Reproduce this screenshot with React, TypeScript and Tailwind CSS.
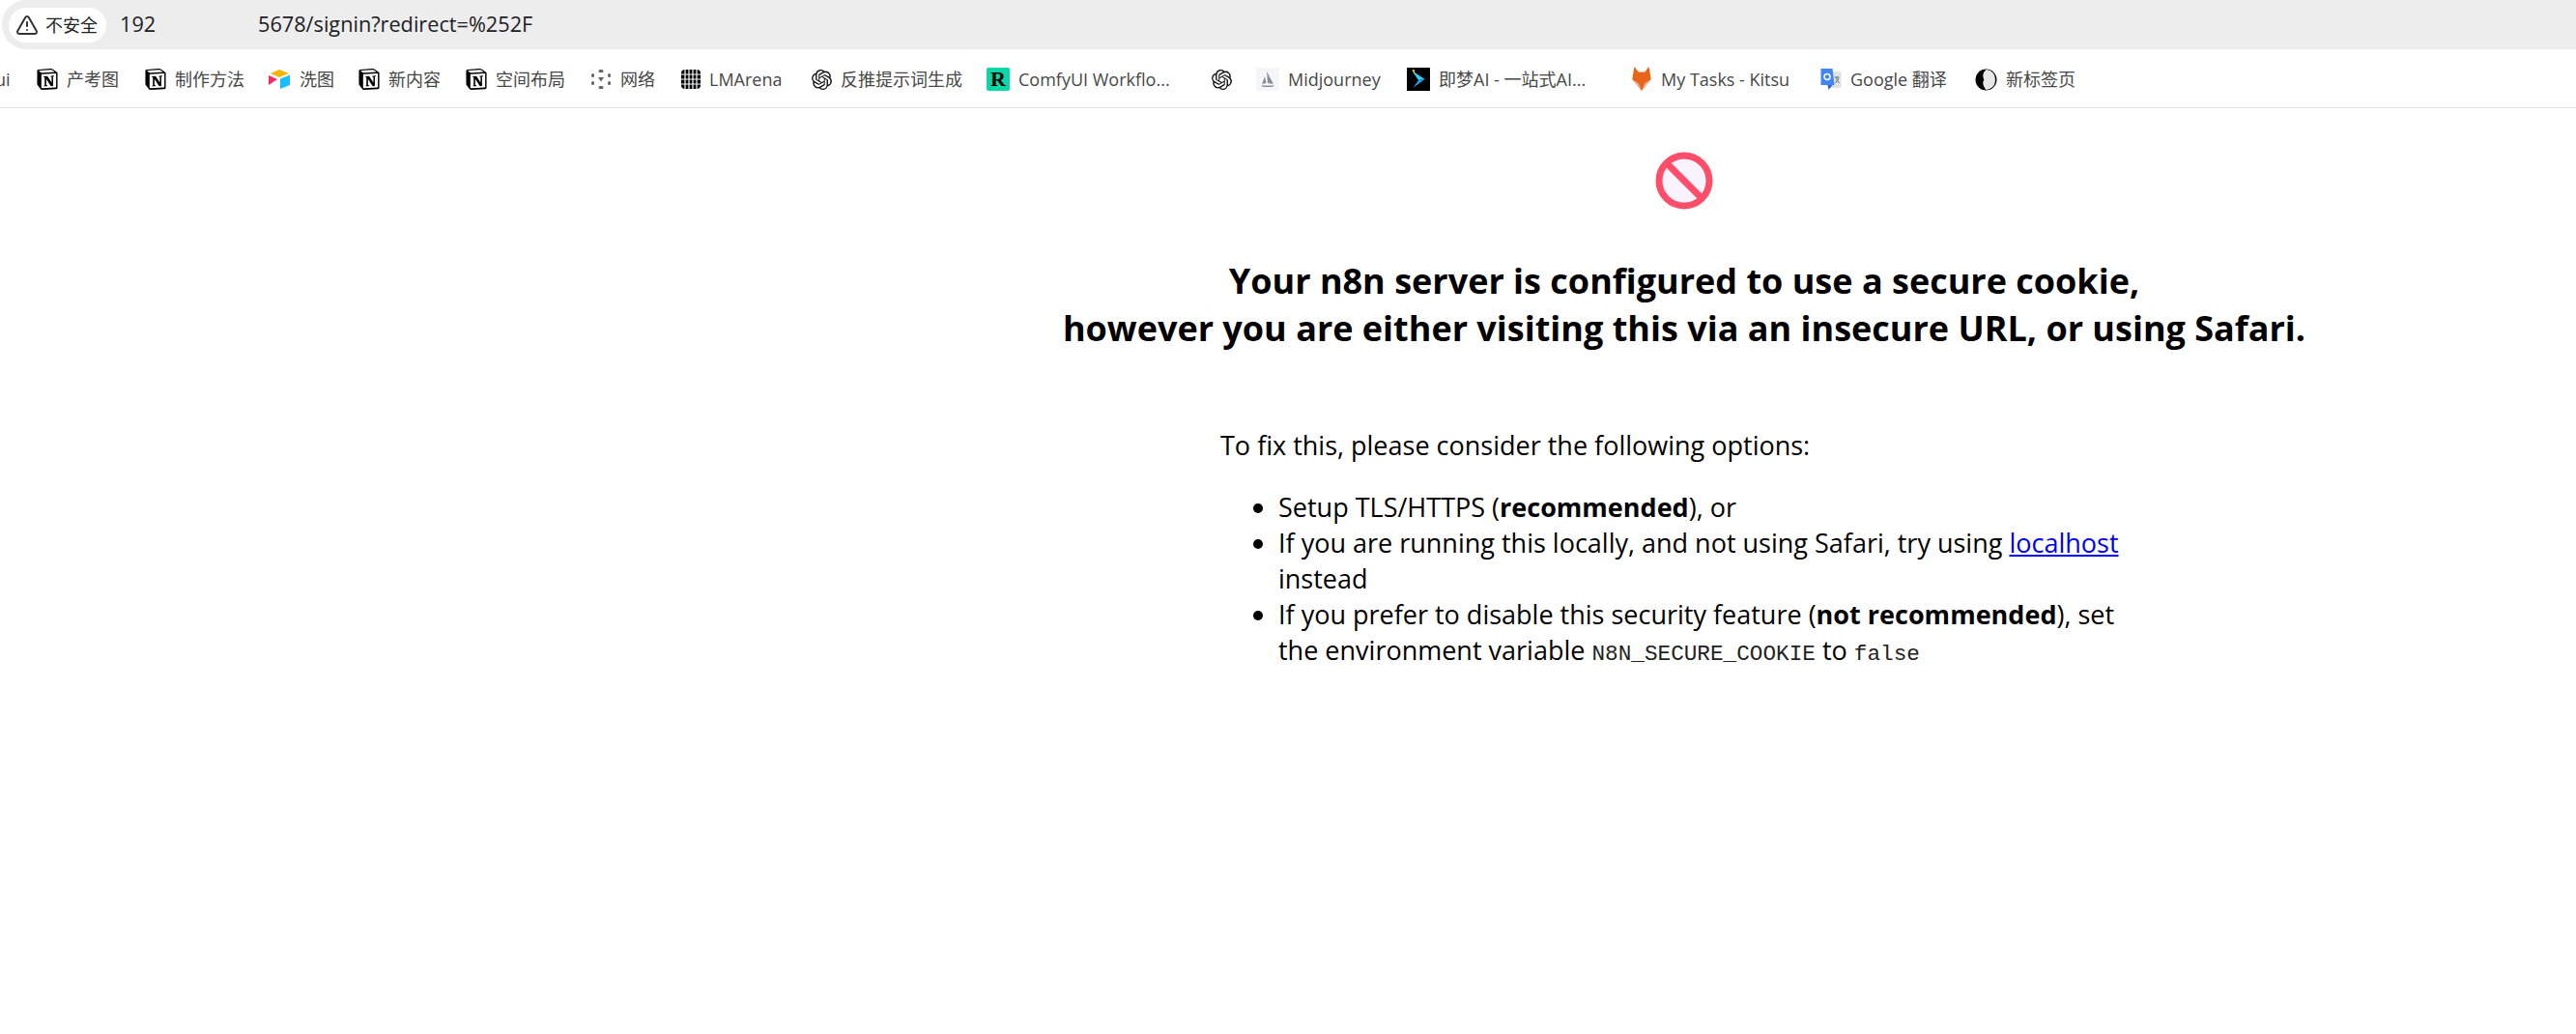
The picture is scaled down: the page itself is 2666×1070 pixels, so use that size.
import { TriangleAlert } from "lucide-react";
import { SiNotion, SiOpenai } from "react-icons/si";

const sans = "font-['Open_Sans','Noto_Sans_CJK_SC',sans-serif]";

function NotionIcon() {
  return <SiNotion size={22} className="shrink-0 text-black" />;
}

function OpenAiIcon() {
  return <SiOpenai size={21} className="shrink-0 text-[#111]" />;
}

function AirtableIcon() {
  return (
    <svg width="24" height="22" viewBox="0 0 24 22" className="shrink-0">
      <path d="M12 1 L22 5 L12 9 L3 5 Z" fill="#fcb400" />
      <path d="M13 10.5 L23 6.5 L23 17 L13 21 Z" fill="#18bfff" />
      <path d="M1 7 L10 11 L1 17 Z" fill="#f82b60" />
    </svg>
  );
}

function DotsIcon() {
  return (
    <svg width="22" height="22" viewBox="0 0 22 22" className="shrink-0">
      <g fill="#666">
        <rect x="8.5" y="1" width="5" height="3" rx="1.5" />
        <rect x="8.5" y="18" width="5" height="3" rx="1.5" />
        <rect x="1" y="5" width="3" height="4" rx="1.5" />
        <rect x="18" y="5" width="3" height="4" rx="1.5" />
        <rect x="1" y="13" width="3" height="4" rx="1.5" />
        <rect x="18" y="13" width="3" height="4" rx="1.5" />
        <path d="M8 9 L14 9 L11 13.5 Z" />
      </g>
    </svg>
  );
}

function GridIcon() {
  return (
    <svg width="20" height="22" viewBox="0 0 20 22" className="shrink-0">
      <rect x="0" y="1" width="20" height="20" rx="4" fill="#000" />
      <path d="M4 1 V21 M8 1 V21 M12 1 V21 M16 1 V21 M0 6 H20 M0 11 H20 M0 16 H20" stroke="#fff" strokeWidth="1.2" />
    </svg>
  );
}

function ComfyIcon() {
  return (
    <div className="flex h-6 w-6 shrink-0 items-center justify-center rounded-[2px] bg-[#0ad7a5] font-['Liberation_Serif',serif] text-[22px] font-bold leading-none text-black">
      R
    </div>
  );
}

function MidjourneyIcon() {
  return (
    <div className="flex h-6 w-6 shrink-0 items-center justify-center bg-[#f4f6f9]">
      <svg width="18" height="20" viewBox="0 0 18 20" fill="#8b8f98">
        <path d="M8 2 L15 15 L9 14 Z" />
        <path d="M6 7 L7.5 14 L3 15 Z" />
        <path d="M2 16.5 L16 16.5 L14 18 L4 18 Z" />
      </svg>
    </div>
  );
}

function JimengIcon() {
  return (
    <div className="flex h-[24px] w-[24px] shrink-0 items-center justify-center bg-black">
      <svg width="18" height="22" viewBox="0 0 16 20">
        <path d="M2 2 L14 10 L8 11 Z" fill="#2bd4f5" />
        <path d="M8 11 L14 10 L3 18 Z" fill="#1f9ff0" />
        <path d="M2 1 L4 1 L5 6 Z" fill="#f5d442" />
      </svg>
    </div>
  );
}

function KitsuIcon() {
  return (
    <svg width="22" height="26" viewBox="0 0 20 24" className="shrink-0">
      <path d="M3 0 L7 5 L13 5 L17 0 L19 12 L10 23 L1 12 Z" fill="#e8661c" />
      <path d="M1 12 L7 16 L10 23 Z" fill="#e9b49a" />
      <path d="M19 12 L13 16 L10 23 Z" fill="#e9b49a" />
    </svg>
  );
}

function TranslateIcon() {
  return (
    <svg width="23" height="24" viewBox="0 0 22 24" className="shrink-0">
      <rect x="8" y="4" width="14" height="17" rx="1" fill="#dfe3e6" />
      <path d="M1 1 H13 L15 18 H1 Z" fill="#4285f4" />
      <path d="M8 18 L13 18 L9 23 Z" fill="#3367d6" />
      <circle cx="7.5" cy="9.5" r="3" fill="none" stroke="#fff" strokeWidth="1.5" />
      <path d="M15 10 H20 M17.5 9 V11 M16 16 L19.5 11 M16.5 11 L20 16" stroke="#6b7378" strokeWidth="1" fill="none" />
    </svg>
  );
}

function NewTabIcon() {
  return (
    <svg width="23" height="23" viewBox="0 0 22 22" className="shrink-0">
      <circle cx="11" cy="11" r="10.5" fill="#000" />
      <path d="M11 1 C18 2 20 6 20 11 C20 16 18 20 11 21 C8 17 7 14 9 11 C7 7 8 4 11 1 Z" fill="#e8e8e8" />
    </svg>
  );
}

const bookmarks = [
  { icon: <NotionIcon />, label: "产考图", w: "w-[112px]" },
  { icon: <NotionIcon />, label: "制作方法", w: "w-[127px]" },
  { icon: <AirtableIcon />, label: "洗图", w: "w-[94px]" },
  { icon: <NotionIcon />, label: "新内容", w: "w-[111px]" },
  { icon: <NotionIcon />, label: "空间布局", w: "w-[129px]" },
  { icon: <DotsIcon />, label: "网络", w: "w-[94px]" },
  { icon: <GridIcon />, label: "LMArena", w: "w-[135px]" },
  { icon: <OpenAiIcon />, label: "反推提示词生成", w: "w-[181px]" },
  { icon: <ComfyIcon />, label: "ComfyUI Workflo...", w: "w-[233px]" },
  { icon: <OpenAiIcon />, label: "", w: "w-[46px]" },
  { icon: <MidjourneyIcon />, label: "Midjourney", w: "w-[156px]" },
  { icon: <JimengIcon />, label: "即梦AI - 一站式AI...", w: "w-[232px]" },
  { icon: <KitsuIcon />, label: "My Tasks - Kitsu", w: "w-[195px]" },
  { icon: <TranslateIcon />, label: "Google 翻译", w: "w-[161px]" },
  { icon: <NewTabIcon />, label: "新标签页", w: "w-[120px]" },
];

export default function App() {
  return (
    <div className={`flex min-h-[1070px] flex-col bg-white ${sans}`}>
      <div className="ml-[2px] flex h-[51px] items-center rounded-l-[25px] bg-[#eeedee] pl-[7px]">
        <div className="flex h-[36px] items-center gap-[7px] rounded-full bg-white pl-[7px] pr-[9px] text-[18px] text-[#222]">
          <TriangleAlert size={24} strokeWidth={2} className="text-[#333]" />
          <span className="font-['Noto_Sans_CJK_SC',sans-serif]">不安全</span>
        </div>
        <div className="ml-[14px] flex text-[21.7px] text-[#202124]">
          <span className="w-[143px]">192</span>
          <span>5678/signin?redirect=%252F</span>
        </div>
      </div>
      <div className="flex h-[61px] items-center overflow-hidden border-b border-[#e2e2e2] pt-[2px] text-[18px] text-[#474747]">
        <span className="-ml-[5px] w-[43px] shrink-0">ui</span>
        {bookmarks.map((b, i) => (
          <div key={i} className={`flex shrink-0 items-center gap-[9px] ${b.w}`}>
            {b.icon}
            {b.label && <span className="whitespace-nowrap">{b.label}</span>}
          </div>
        ))}
      </div>
      <main className="ml-[1098px] flex w-[1290px] flex-col items-center pt-[44px] text-black">
        <svg width="62" height="62" viewBox="0 0 62 62" stroke="#ff4d6a" strokeWidth="7">
          <circle cx="31" cy="31" r="26" fill="#f8f3fe" />
          <path d="M13 13 L49 49" fill="none" />
        </svg>
        <h1 className="mt-[48px] text-center text-[36px] font-bold leading-[49px]">
          Your n8n server is configured to use a secure cookie,
          <br />
          however you are either visiting this via an insecure URL, or using Safari.
        </h1>
        <div className="mt-[78px] w-[960px] text-[27px] leading-[37px]">
          <p>To fix this, please consider the following options:</p>
          <ul className="mt-[27px] list-disc pl-[60px]">
            <li>
              Setup TLS/HTTPS (<b>recommended</b>), or
            </li>
            <li>
              If you are running this locally, and not using Safari, try using{" "}
              <a href="#" className="text-[#0000ee] underline">localhost</a> instead
            </li>
            <li>
              If you prefer to disable this security feature (<b>not recommended</b>), set the environment variable{" "}
              <code className="font-['Liberation_Mono',monospace] text-[22.7px] text-[#222]">N8N_SECURE_COOKIE</code> to{" "}
              <code className="font-['Liberation_Mono',monospace] text-[22.7px] text-[#222]">false</code>
            </li>
          </ul>
        </div>
      </main>
    </div>
  );
}
